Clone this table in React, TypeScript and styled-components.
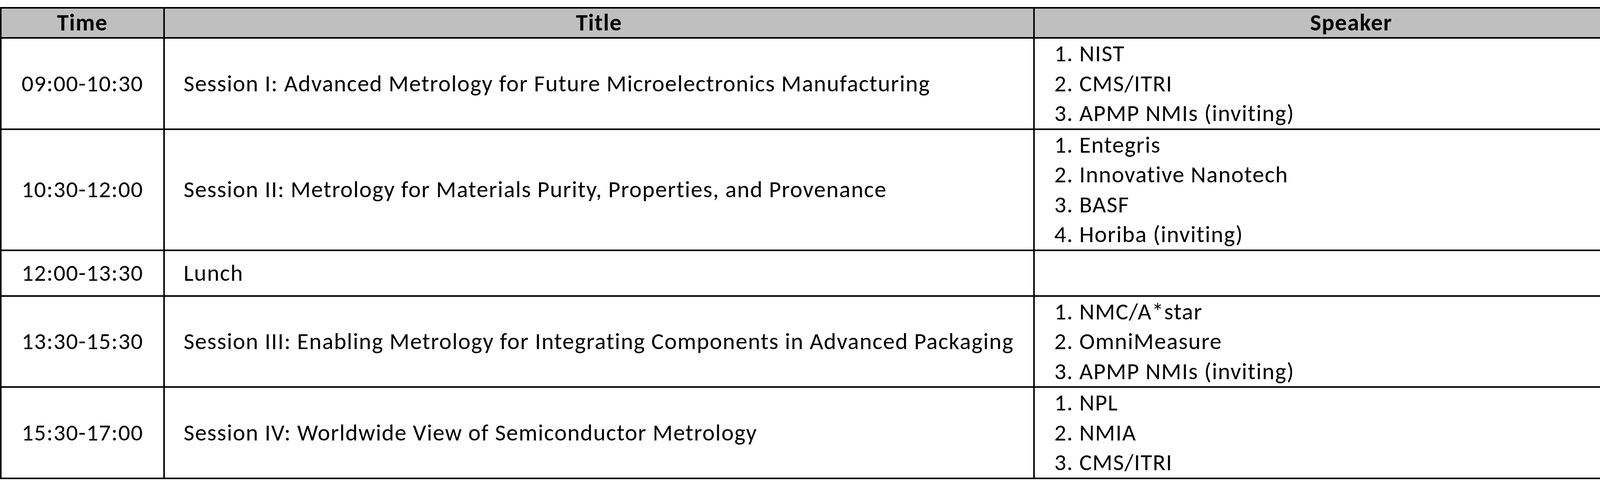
import React from "react";
import styled, { createGlobalStyle } from "styled-components";

const GlobalStyle = createGlobalStyle`
  html, body {
    margin: 0;
    padding: 0;
    background: #ffffff;
  }
  body {
    font-family: "Carlito", "Lato", "Liberation Sans", sans-serif;
    color: #000000;
    font-variant-ligatures: none;
    font-feature-settings: "liga" 0, "clig" 0;
  }
`;

const Page = styled.div`
  padding-top: 18px;
`;

const Grid = styled.div`
  display: grid;
  grid-template-columns: 414px 2223px 1620px;
  gap: 4px;
  padding: 4px;
  width: 4273px;
  box-sizing: border-box;
  background: #000000;
  font-size: 60px;
  letter-spacing: 1.6px;
  line-height: 76.5px;
`;

const Row = styled.div`
  display: contents;
`;

const HeadCell = styled.div`
  background: #bfbfbf;
  font-weight: 700;
  height: 73px;
  display: flex;
  align-items: center;
  justify-content: center;
`;

const Cell = styled.div<{ $minHeight?: number }>`
  background: #ffffff;
  min-height: ${(p) => p.$minHeight ?? 0}px;
  display: flex;
  flex-direction: column;
`;

const TimeCell = styled(Cell)`
  align-items: center;
  justify-content: center;
`;

const TitleCell = styled(Cell)`
  justify-content: center;
  padding-left: 48px;
  white-space: nowrap;
`;

const SpeakerCell = styled(Cell)`
  justify-content: flex-start;
  padding-left: 50px;
  white-space: nowrap;
`;

const SpeakerLine = styled.div``;

type Session = {
  time: string;
  title: string;
  speakers: string[];
  minHeight?: number;
};

const sessions: Session[] = [
  {
    time: "09:00-10:30",
    title: "Session I: Advanced Metrology for Future Microelectronics Manufacturing",
    speakers: ["1. NIST", "2. CMS/ITRI", "3. APMP NMIs (inviting)"],
  },
  {
    time: "10:30-12:00",
    title: "Session II: Metrology for Materials Purity, Properties, and Provenance",
    speakers: ["1. Entegris", "2. Innovative Nanotech", "3. BASF", "4. Horiba (inviting)"],
  },
  {
    time: "12:00-13:30",
    title: "Lunch",
    speakers: [],
    minHeight: 113,
  },
  {
    time: "13:30-15:30",
    title: "Session III: Enabling Metrology for Integrating Components in Advanced Packaging",
    speakers: ["1. NMC/A*star", "2. OmniMeasure", "3. APMP NMIs (inviting)"],
  },
  {
    time: "15:30-17:00",
    title: "Session IV: Worldwide View of Semiconductor Metrology",
    speakers: ["1. NPL", "2. NMIA", "3. CMS/ITRI"],
  },
];

export default function App() {
  return (
    <>
      <GlobalStyle />
      <Page>
        <Grid>
          <Row>
            <HeadCell>Time</HeadCell>
            <HeadCell>Title</HeadCell>
            <HeadCell>Speaker</HeadCell>
          </Row>
          {sessions.map((s) => (
            <Row key={s.time}>
              <TimeCell $minHeight={s.minHeight}>{s.time}</TimeCell>
              <TitleCell $minHeight={s.minHeight}>{s.title}</TitleCell>
              <SpeakerCell $minHeight={s.minHeight}>
                {s.speakers.map((sp) => (
                  <SpeakerLine key={sp}>{sp}</SpeakerLine>
                ))}
              </SpeakerCell>
            </Row>
          ))}
        </Grid>
      </Page>
    </>
  );
}
